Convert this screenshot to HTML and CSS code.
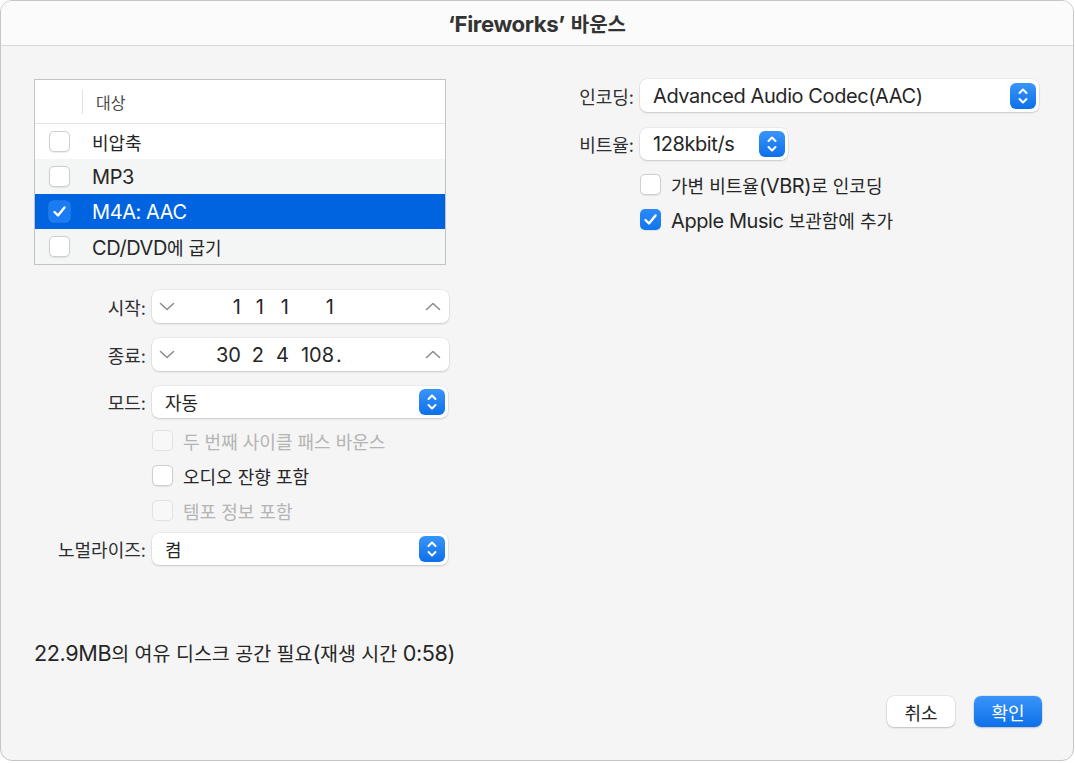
FILE: index.html
```html
<!DOCTYPE html>
<html lang="ko">
<head>
    <meta charset="UTF-8">
    <title>Fireworks 바운스</title>
    <link rel="stylesheet" href="styles.css">
</head>
<body>
    <div class="window">
        <div class="titlebar"><span class="en">‘Fireworks’</span> 바운스</div>

        <div class="content">
            <div class="main">
                <div class="left">
                    <div class="dest-table">
                        <div class="table-head">
                            <span class="head-sep"></span>
                            <span>대상</span>
                        </div>
                        <div class="table-row">
                            <span class="check"></span>
                            <span>비압축</span>
                        </div>
                        <div class="table-row alt">
                            <span class="check"></span>
                            <span class="en">MP3</span>
                        </div>
                        <div class="table-row selected">
                            <span class="check checked">
                                <svg width="21" height="21" viewBox="0 0 21 21"><path d="M5.5 11 L9 14.5 L15.5 6.5" fill="none" stroke="#fff" stroke-width="2.4" stroke-linecap="round" stroke-linejoin="round"/></svg>
                            </span>
                            <span class="en">M4A: AAC</span>
                        </div>
                        <div class="table-row alt">
                            <span class="check"></span>
                            <span><span class="en">CD/DVD</span>에 굽기</span>
                        </div>
                    </div>

                    <div class="form">
                        <div class="form-row stepper-row">
                            <span class="label">시작:</span>
                            <div class="stepper">
                                <span class="chevron">
                                    <svg width="16" height="9" viewBox="0 0 16 9"><path d="M1.5 1.5 L8 7.5 L14.5 1.5" fill="none" stroke="#8c8c8c" stroke-width="1.6" stroke-linecap="round" stroke-linejoin="round"/></svg>
                                </span>
                                <div class="position">
                                    <span class="pos-bar">1</span>
                                    <span class="pos-beat">1</span>
                                    <span class="pos-div">1</span>
                                    <span class="pos-tick">1</span>
                                </div>
                                <span class="chevron">
                                    <svg width="16" height="9" viewBox="0 0 16 9"><path d="M1.5 7.5 L8 1.5 L14.5 7.5" fill="none" stroke="#8c8c8c" stroke-width="1.6" stroke-linecap="round" stroke-linejoin="round"/></svg>
                                </span>
                            </div>
                        </div>
                        <div class="form-row stepper-row">
                            <span class="label">종료:</span>
                            <div class="stepper">
                                <span class="chevron">
                                    <svg width="16" height="9" viewBox="0 0 16 9"><path d="M1.5 1.5 L8 7.5 L14.5 1.5" fill="none" stroke="#8c8c8c" stroke-width="1.6" stroke-linecap="round" stroke-linejoin="round"/></svg>
                                </span>
                                <div class="position">
                                    <span class="pos-bar">30</span>
                                    <span class="pos-beat">2</span>
                                    <span class="pos-div">4</span>
                                    <span class="pos-tick">108</span>
                                    <span class="pos-dot">.</span>
                                </div>
                                <span class="chevron">
                                    <svg width="16" height="9" viewBox="0 0 16 9"><path d="M1.5 7.5 L8 1.5 L14.5 7.5" fill="none" stroke="#8c8c8c" stroke-width="1.6" stroke-linecap="round" stroke-linejoin="round"/></svg>
                                </span>
                            </div>
                        </div>
                        <div class="form-row popup-row">
                            <span class="label">모드:</span>
                            <div class="popup">
                                <span>자동</span>
                                <span class="popup-arrows">
                                    <svg width="26" height="26" viewBox="0 0 26 26"><path d="M9.5 10 L13 6.5 L16.5 10 M9.5 16 L13 19.5 L16.5 16" fill="none" stroke="#fff" stroke-width="2" stroke-linecap="round" stroke-linejoin="round"/></svg>
                                </span>
                            </div>
                        </div>
                        <div class="form-row check-row first-check">
                            <span></span>
                            <div class="check-item disabled">
                                <span class="check"></span>
                                <span>두 번째 사이클 패스 바운스</span>
                            </div>
                        </div>
                        <div class="form-row check-row">
                            <span></span>
                            <div class="check-item">
                                <span class="check"></span>
                                <span>오디오 잔향 포함</span>
                            </div>
                        </div>
                        <div class="form-row check-row">
                            <span></span>
                            <div class="check-item disabled">
                                <span class="check"></span>
                                <span>템포 정보 포함</span>
                            </div>
                        </div>
                        <div class="form-row popup-row normalize-row">
                            <span class="label">노멀라이즈:</span>
                            <div class="popup">
                                <span>켬</span>
                                <span class="popup-arrows">
                                    <svg width="26" height="26" viewBox="0 0 26 26"><path d="M9.5 10 L13 6.5 L16.5 10 M9.5 16 L13 19.5 L16.5 16" fill="none" stroke="#fff" stroke-width="2" stroke-linecap="round" stroke-linejoin="round"/></svg>
                                </span>
                            </div>
                        </div>
                    </div>
                </div>

                <div class="right">
                    <div class="form-row encoding-row">
                        <span class="label">인코딩:</span>
                        <div class="popup">
                            <span class="en">Advanced Audio Codec(AAC)</span>
                            <span class="popup-arrows">
                                <svg width="26" height="26" viewBox="0 0 26 26"><path d="M9.5 10 L13 6.5 L16.5 10 M9.5 16 L13 19.5 L16.5 16" fill="none" stroke="#fff" stroke-width="2" stroke-linecap="round" stroke-linejoin="round"/></svg>
                            </span>
                        </div>
                    </div>
                    <div class="form-row bitrate-row">
                        <span class="label">비트율:</span>
                        <div class="popup">
                            <span class="en">128kbit/s</span>
                            <span class="popup-arrows">
                                <svg width="26" height="26" viewBox="0 0 26 26"><path d="M9.5 10 L13 6.5 L16.5 10 M9.5 16 L13 19.5 L16.5 16" fill="none" stroke="#fff" stroke-width="2" stroke-linecap="round" stroke-linejoin="round"/></svg>
                            </span>
                        </div>
                    </div>
                    <div class="form-row check-row right-first">
                        <span></span>
                        <div class="check-item">
                            <span class="check"></span>
                            <span>가변 비트율<span class="en">(VBR)</span>로 인코딩</span>
                        </div>
                    </div>
                    <div class="form-row check-row">
                        <span></span>
                        <div class="check-item">
                            <span class="check checked">
                                <svg width="21" height="21" viewBox="0 0 21 21"><path d="M5.5 11 L9 14.5 L15.5 6.5" fill="none" stroke="#fff" stroke-width="2.4" stroke-linecap="round" stroke-linejoin="round"/></svg>
                            </span>
                            <span><span class="en">Apple Music</span> 보관함에 추가</span>
                        </div>
                    </div>
                </div>
            </div>

            <div class="disk-info"><span class="en">22.9MB</span>의 여유 디스크 공간 필요<span class="en">(</span>재생 시간 <span class="en">0:58)</span></div>

            <div class="buttons">
                <button class="btn">취소</button>
                <button class="btn primary">확인</button>
            </div>
        </div>
    </div>
</body>
</html>
```

FILE: styles.css
```css
body {
    margin: 0;
    background: #fff;
    font-family: Inter, "Noto Sans CJK KR", sans-serif;
    font-size: 18px;
    color: #262626;
}
/* latin runs are set a little larger than the hangul, as on macOS */
.en {
    font-size: 1.11em;
    letter-spacing: -0.4px;
}
.window {
    box-sizing: border-box;
    width: 1074px;
    height: 761px;
    border: 1px solid #c6c6c6;
    border-radius: 12px;
    background: #f5f5f5;
    overflow: hidden;
    display: flex;
    flex-direction: column;
}
.titlebar {
    flex: none;
    height: 44px;
    background: #fbfbfb;
    border-bottom: 1px solid #dadada;
    display: flex;
    align-items: center;
    justify-content: center;
    gap: 6px;
    font-weight: 700;
    font-size: 20px;
    color: #333;
}
.content {
    flex: 1;
    display: flex;
    flex-direction: column;
    padding: 33px 31px 33px 33px;
}
.main {
    display: flex;
}
.left {
    width: 415px;
}
.right {
    margin-left: 51px;
    flex: 1;
}

/* destination table */
.dest-table {
    width: 412px;
    box-sizing: border-box;
    border: 1px solid #c3c3c3;
    background: #fff;
}
.table-head {
    height: 43px;
    border-bottom: 1px solid #e2e2e2;
    display: flex;
    align-items: center;
    font-size: 16px;
    color: #4a4a4a;
}
.head-sep {
    width: 1px;
    height: 24px;
    background: #e0e0e0;
    margin: 0 13px 0 47px;
}
.table-row {
    height: 35px;
    display: flex;
    align-items: center;
    padding-left: 14px;
    gap: 22px;
}
.table-row.alt {
    background: #f4f5f5;
}
.table-row.selected {
    background: #0064e1;
    color: #fff;
}

/* checkboxes */
.check {
    box-sizing: border-box;
    width: 21px;
    height: 21px;
    flex: none;
    border-radius: 5px;
    background: #fff;
    border: 1px solid #cfcfcf;
    box-shadow: 0 0.5px 1px rgba(0,0,0,0.08);
}
.check.checked {
    border: none;
    background: linear-gradient(#2c8af8, #1175ee);
}
.selected .check.checked {
    background: #1a7cf3;
    box-shadow: 0 0 0 0.5px rgba(255,255,255,0.25);
}
.check svg {
    display: block;
}
.check-item {
    display: flex;
    align-items: center;
    gap: 10px;
}
.check-item.disabled {
    color: #b4b4b4;
}
.check-item.disabled .check {
    background: #f8f8f8;
    border-color: #e1e1e1;
    box-shadow: none;
}

/* form rows */
.form {
    margin-top: 25px;
}
.form-row {
    display: grid;
    grid-template-columns: 112px 296px;
    column-gap: 6px;
    align-items: center;
}
.label {
    text-align: right;
    color: #2e2e2e;
}
.stepper-row {
    height: 33px;
    margin-bottom: 15px;
}
.stepper {
    height: 33px;
    width: 297px;
    box-sizing: border-box;
    background: #fff;
    border-radius: 7px;
    box-shadow: 0 0 0 0.5px rgba(0,0,0,0.08), 0 1px 2px rgba(0,0,0,0.15);
    display: flex;
    align-items: center;
    padding: 0 8px 0 7px;
}
.chevron svg {
    display: block;
}
.position {
    flex: 1;
    display: flex;
    padding-left: 8px;
    font-size: 20px;
}
.pos-bar {
    width: 58px;
    text-align: right;
}
.pos-beat {
    width: 23px;
    text-align: right;
}
.pos-div {
    width: 25px;
    text-align: right;
}
.pos-tick {
    width: 45px;
    text-align: right;
}
.pos-dot {
    margin-left: 2px;
}
.popup-row {
    height: 32px;
}
.popup {
    height: 32px;
    box-sizing: border-box;
    background: #fff;
    border-radius: 7px;
    box-shadow: 0 0 0 0.5px rgba(0,0,0,0.08), 0 1px 2px rgba(0,0,0,0.15);
    display: flex;
    align-items: center;
    justify-content: space-between;
    padding: 0 3px 0 13px;
}
.popup-arrows {
    width: 26px;
    height: 26px;
    border-radius: 6px;
    background: linear-gradient(#3a95fa, #0d70e9);
}
.popup-arrows svg {
    display: block;
}
.check-row {
    height: 35px;
}
.first-check {
    margin-top: 5px;
}
.normalize-row {
    margin-top: 5px;
}

/* right column */
.right .form-row {
    grid-template-columns: 134px auto;
}
.encoding-row {
    height: 33px;
}
.encoding-row .popup {
    width: 399px;
    height: 33px;
}
.bitrate-row {
    height: 32px;
    margin-top: 16px;
}
.bitrate-row .popup {
    width: 148px;
}
.right-first {
    margin-top: 7px;
}

/* footer */
.disk-info {
    margin-top: auto;
    line-height: 22px;
    font-size: 19.5px;
}
.buttons {
    margin-top: 31px;
    display: flex;
    justify-content: flex-end;
    gap: 19px;
}
.btn {
    height: 31px;
    min-width: 68px;
    padding: 0 16px;
    border: none;
    border-radius: 7px;
    background: #fff;
    box-shadow: 0 0 0 0.5px rgba(0,0,0,0.1), 0 1px 2px rgba(0,0,0,0.18);
    font-family: inherit;
    font-size: 18px;
    color: #262626;
}
.btn.primary {
    background: linear-gradient(#3a95fa, #0d70e9);
    color: #fff;
}
```
